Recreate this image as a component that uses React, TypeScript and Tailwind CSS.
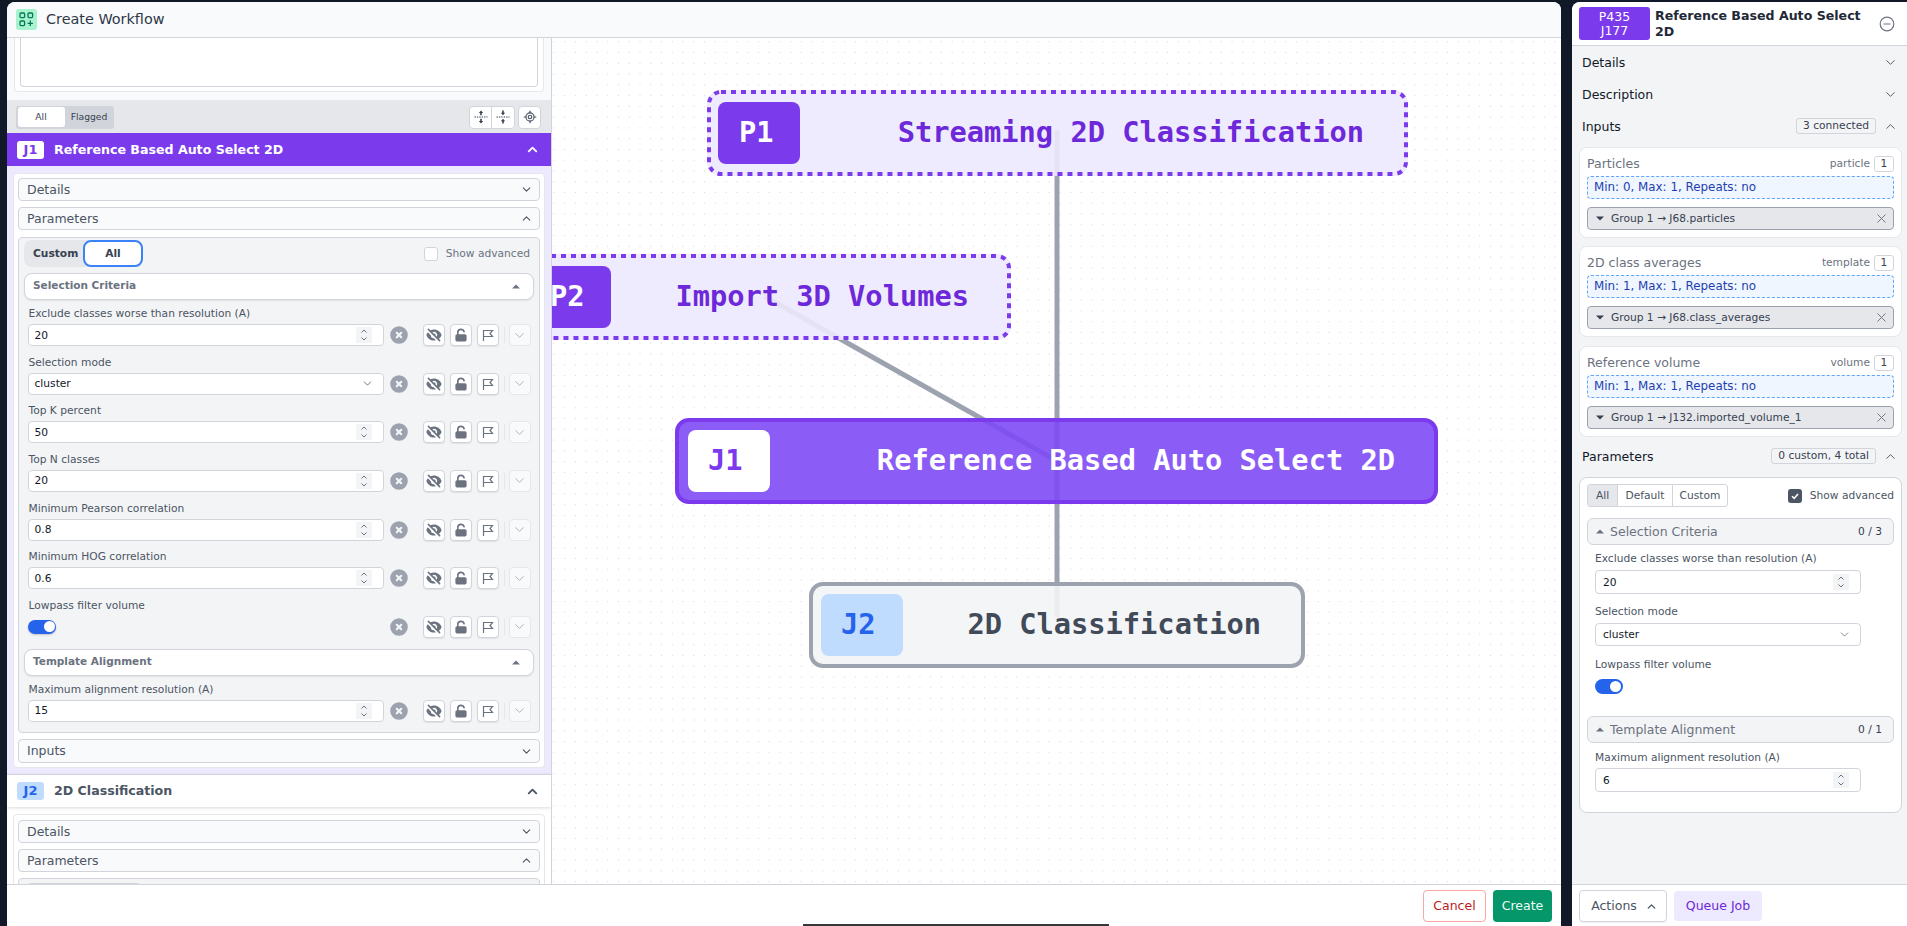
import React from "react";
import { ChevronDown, ChevronUp, LocateFixed, X } from "lucide-react";
import { HiEyeOff, HiLockOpen, HiXCircle } from "react-icons/hi";

const Caret = ({ up = false, cls = "" }: { up?: boolean; cls?: string }) => (
  <svg width="8" height="5" viewBox="0 0 8 5" className={cls}>
    <polygon points={up ? "4,0.5 8,4.5 0,4.5" : "0,0.5 8,0.5 4,4.5"} fill="currentColor" />
  </svg>
);

const Spinner = () => (
  <div className="w-[16px] h-[16px] bg-[#f3f4f6] flex flex-col items-center justify-center text-[#6b7280] shrink-0">
    <svg width="8" height="14" viewBox="0 0 8 14" fill="none" stroke="currentColor" strokeWidth="1">
      <path d="M1.5 4.5 4 2l2.5 2.5M1.5 9.5 4 12l2.5-2.5" />
    </svg>
  </div>
);

const FlagIcon = () => (
  <svg width="14" height="14" viewBox="0 0 14 14" fill="none" stroke="currentColor" strokeWidth="1.2">
    <path d="M2.5 13V2.5h9L9 5.5l2.5 3H2.5" />
  </svg>
);

const ExpandIcon = ({ inward = false }: { inward?: boolean }) => (
  <svg width="14" height="14" viewBox="0 0 14 14" className="text-[#374151]">
    <path d="M0.5 7h13" stroke="currentColor" strokeWidth="1" strokeDasharray="1.4 1" fill="none" />
    {inward ? (
      <path d="M7 5.2 4.8 2.8h1.4V0.6h1.6v2.2h1.4zM7 8.8l2.2 2.4H7.8v2.2H6.2v-2.2H4.8z" fill="currentColor" />
    ) : (
      <path d="M7 0.6 9.2 3H7.8v2.2H6.2V3H4.8zM7 13.4 4.8 11h1.4V8.8h1.6V11h1.4z" fill="currentColor" />
    )}
  </svg>
);

const IconBtn = ({ children, faded = false }: { children: React.ReactNode; faded?: boolean }) => (
  <div
    className={
      "w-[22px] h-[22px] rounded-[4px] border flex items-center justify-center shrink-0 " +
      (faded
        ? "border-[#e5e7eb] bg-[#f9fafb] text-[#9ca3af]"
        : "border-[#d1d5db] bg-white text-[#6b7280] shadow-[0_1px_1px_rgba(0,0,0,0.08)]")
    }
  >
    {children}
  </div>
);

const RowActions = () => (
  <>
    <div className="w-[18px] ml-[6px] shrink-0 text-[#9ca3af] flex items-center justify-center">
      <HiXCircle size={22} className="shrink-0" />
    </div>
    <div className="ml-[15px]">
      <IconBtn>
        <HiEyeOff size={16} />
      </IconBtn>
    </div>
    <div className="ml-[5px]">
      <IconBtn>
        <HiLockOpen size={16} />
      </IconBtn>
    </div>
    <div className="ml-[5px]">
      <IconBtn>
        <FlagIcon />
      </IconBtn>
    </div>
    <div className="ml-[5px] w-px h-[16px] bg-[#e5e7eb]" />
    <div className="ml-[4px]">
      <IconBtn faded>
        <ChevronDown size={15} strokeWidth={1.3} />
      </IconBtn>
    </div>
  </>
);

const ParamRow = ({ label, value, select = false, toggle = false }: { label: string; value?: string; select?: boolean; toggle?: boolean }) => (
  <div className="h-[48.67px] pl-[3.5px] shrink-0">
    <div className="h-[15px] leading-[15px] text-[10.67px] text-[#4b5563] ml-[1px]">{label}</div>
    <div className="mt-[3px] flex items-center h-[22px]">
      {toggle ? (
        <div className="w-[356px] shrink-0">
          <div className="w-[28px] h-[14px] rounded-full bg-[#2563eb] flex items-center justify-end pr-[1px] shadow-[0_1px_2px_rgba(0,0,0,0.2)]">
            <div className="w-[11px] h-[11px] rounded-full bg-white" />
          </div>
        </div>
      ) : (
        <div className="w-[356px] h-[22px] shrink-0 bg-white border border-[#d1d5db] rounded-[4px] flex items-center justify-between pl-[6px] pr-[11px] text-[10.67px] text-[#111827]">
          <span className="pt-[1px]">{value}</span>
          {select ? <ChevronDown size={13} strokeWidth={1.5} className="text-[#4b5563] mr-[-2px]" /> : <Spinner />}
        </div>
      )}
      <RowActions />
    </div>
  </div>
);

const Section = ({ title }: { title: string }) => (
  <div className="h-[27px] bg-white border border-[#d1d5db] rounded-lg shadow-[0_1px_2px_rgba(0,0,0,0.08)] flex items-center justify-between pl-[8px] pr-[13px] text-[10.5px] font-bold text-[#6b7280] shrink-0">
    <span className="pb-[2px]">{title}</span>
    <Caret up cls="text-[#6b7280]" />
  </div>
);

const CollapseRow = ({ title, open = false, tall = false }: { title: string; open?: boolean; tall?: boolean }) => (
  <div
    className={
      "bg-[#f9fafb] border border-[#d1d5db] rounded-[4px] flex items-center justify-between pl-[8px] pr-[6px] text-[12.5px] text-[#4b5563] shrink-0 " +
      (tall ? "h-[24px]" : "h-[23px]")
    }
  >
    <span className="pt-[1px]">{title}</span>
    {open ? <ChevronUp size={13} strokeWidth={2} /> : <ChevronDown size={13} strokeWidth={2} />}
  </div>
);

const JobHeader = ({ id, title, active = false }: { id: string; title: string; active?: boolean }) => (
  <div
    className={
      "h-[33px] shrink-0 flex items-center pl-[10px] pr-[11px] " +
      (active ? "bg-[#7c3aed] text-white" : "bg-white text-[#4b5563] border-t border-[#d1d5db] shadow-[0_1px_3px_rgba(0,0,0,0.15)] relative")
    }
  >
    <div
      className={
        "w-[27px] h-[18px] rounded-[3px] flex items-center justify-center text-[13px] font-bold " +
        (active ? "bg-white text-[#7c3aed]" : "bg-[#bfdbfe] text-[#2563eb]")
      }
    >
      {id}
    </div>
    <div className={"ml-[10px] flex-1 text-[12.6px] font-bold " + (active ? "pt-[1px]" : "")}>{title}</div>
    <ChevronUp size={15} strokeWidth={3} />
  </div>
);

const GraphNode = ({
  pos,
  wrap,
  badge,
  id,
  title,
  titleCls,
  dashed,
  pad = "pl-[8px]",
}: {
  pos: string;
  wrap: string;
  badge: string;
  id: string;
  title: string;
  titleCls: string;
  dashed?: number;
  pad?: string;
}) => (
  <div className={"absolute flex items-center justify-between h-[86px] rounded-[14px] font-['DejaVu_Sans_Mono'] font-bold text-[28.7px] " + pad + " " + pos + " " + wrap}>
    {dashed ? (
      <svg className="absolute left-0 top-0" width={dashed} height="86" fill="none" stroke="#7c3aed" strokeWidth="4" strokeDasharray="5 5">
        <rect x="2" y="2" width={dashed - 4} height="82" rx="12" />
      </svg>
    ) : null}
    <div className={"relative w-[82px] h-[62px] rounded-lg flex items-center shrink-0 " + (dashed ? "pl-[21px] " : "pl-[20px] ") + badge}>{id}</div>
    <div className={"relative whitespace-nowrap " + titleCls}>{title}</div>
  </div>
);

const InputCard = ({ title, kind, min, group, mt }: { title: string; kind: string; min: string; group: string; mt: string }) => (
  <div className={"ml-[7px] mr-[5px] h-[91px] bg-white border border-[#e5e7eb] rounded-lg px-[7px] pt-[8px] shrink-0 " + mt}>
    <div className="h-[16px] flex items-center justify-between">
      <span className="text-[12.5px] text-[#6b7280]">{title}</span>
      <div className="flex items-center">
        <span className="text-[10.67px] text-[#6b7280]">{kind}</span>
        <span className="ml-[4px] w-[20px] h-[16px] border border-[#d1d5db] rounded-[3px] flex items-center justify-center text-[10.67px] text-[#374151]">1</span>
      </div>
    </div>
    <div className="mt-[4px] h-[23px] bg-[#eff6ff] border border-dashed border-[#60a5fa] rounded-[4px] flex items-center pl-[6px] text-[11.9px] text-[#1e40af]">{min}</div>
    <div className="mt-[8px] h-[23px] bg-[#e5e7eb] border border-[#9ca3af] rounded-[4px] flex items-center pl-[8px] pr-[4px] text-[10.67px] text-[#374151]">
      <Caret cls="text-[#374151] shrink-0" />
      <span className="ml-[7px] flex-1">{group}</span>
      <X size={15} strokeWidth={1.5} className="text-[#6b7280]" />
    </div>
  </div>
);

const AccRow = ({ title, open = false, badge }: { title: string; open?: boolean; badge?: string }) => (
  <div className="h-[32px] shrink-0 flex items-center pl-[10px] pr-[9px] text-[12.5px] text-[#111827]">
    <span className="flex-1 pt-[2px]">{title}</span>
    {badge && (
      <span className="mr-[7px] h-[16.5px] px-[6px] flex items-center border border-[#d1d5db] rounded-[3px] text-[10.67px] text-[#374151]">{badge}</span>
    )}
    {open ? <ChevronUp size={15} strokeWidth={1.5} className="text-[#4b5563]" /> : <ChevronDown size={15} strokeWidth={1.5} className="text-[#4b5563]" />}
  </div>
);

const GrayHead = ({ title, count, mt }: { title: string; count: string; mt: string }) => (
  <div className={"h-[27px] bg-[#f3f4f6] border border-[#d1d5db] rounded-md flex items-center pl-[8px] pr-[11px] shrink-0 " + mt}>
    <Caret up cls="text-[#6b7280]" />
    <span className="ml-[6px] flex-1 text-[12.5px] text-[#6b7280] pt-[1px]">{title}</span>
    <span className="text-[10.67px] text-[#374151]">{count}</span>
  </div>
);

export default function App() {
  return (
    <div className="relative w-[1907px] h-[926px] overflow-hidden bg-[#111827] pt-[2px] pl-[7px] flex font-['DejaVu_Sans',sans-serif]">
      {/* Modal */}
      <div className="w-[1554px] h-full flex flex-col bg-white rounded-t-lg overflow-hidden shrink-0">
        <div className="h-[36px] shrink-0 bg-[#f9fafb] border-b border-[#d1d5db] flex items-center pl-[9px]">
          <div className="w-[21px] h-[21px] rounded-[3px] bg-[#a7f3d0] text-[#047857] flex items-center justify-center">
            <svg width="15" height="15" viewBox="0 0 15 15" fill="none" stroke="currentColor" strokeWidth="1.3">
              <rect x="1" y="1" width="4.6" height="4.6" rx="1" />
              <rect x="9" y="1" width="4.6" height="4.6" rx="1" />
              <rect x="1" y="9" width="4.6" height="4.6" rx="1" />
              <path d="M11.3 8.6v5.4M8.6 11.3H14" />
            </svg>
          </div>
          <span className="ml-[9px] text-[14.4px] text-[#2d3748]">Create Workflow</span>
        </div>

        <div className="flex-1 flex min-h-0">
          {/* Left panel */}
          <div className="w-[545px] shrink-0 border-r border-[#d1d5db] flex flex-col overflow-hidden bg-white">
            <div className="h-[63px] shrink-0 bg-[#f9fafb] border-b border-[#e5e7eb] px-[7px]">
              <div className="h-[54px] bg-white border border-t-0 border-[#e5e7eb] rounded-b-[4px] px-[5px]">
                <div className="h-[49px] bg-white border border-t-0 border-[#d1d5db] rounded-b-[4px]" />
              </div>
            </div>
            <div className="h-[32px] shrink-0 bg-[#e5e7eb] flex items-center pl-[9px] pr-[10px]">
              <div className="w-[98px] h-[23px] bg-[#d1d5db] rounded-[3px] flex items-center px-[2px] text-[9.2px] text-[#374151]">
                <div className="w-[47px] h-[20px] bg-white rounded-[3px] flex items-center justify-center pr-[1px]">All</div>
                <div className="flex-1 text-center pl-[1px]">Flagged</div>
              </div>
              <div className="flex-1" />
              <div className="h-[23px] flex bg-white border border-[#d1d5db] rounded-[4px]">
                <div className="w-[22px] flex items-center justify-center border-r border-[#d1d5db]">
                  <ExpandIcon />
                </div>
                <div className="w-[22px] flex items-center justify-center">
                  <ExpandIcon inward />
                </div>
              </div>
              <div className="ml-[3px] w-[23px] h-[23px] bg-white border border-[#d1d5db] rounded-[4px] flex items-center justify-center text-[#4b5563]">
                <LocateFixed size={14} strokeWidth={2} />
              </div>
            </div>
            <JobHeader id="J1" title="Reference Based Auto Select 2D" active />
            <div className="h-[608px] shrink-0 bg-[#ede9fe] px-[6px] pt-[7px]">
              <div className="h-[595px] bg-white border border-[#e5e7eb] rounded-[4px] px-[4px] pt-[4px] flex flex-col">
                <CollapseRow title="Details" />
                <div className="mt-[6px]">
                  <CollapseRow title="Parameters" open />
                </div>
                <div className="mt-[7px] h-[496px] bg-[#f3f4f6] border border-[#d1d5db] rounded-[4px] px-[5px] pt-[2px] flex flex-col shrink-0">
                  <div className="h-[27px] flex items-center justify-between shrink-0">
                    <div className="flex items-center h-[27px] w-[119px] bg-[#e5e7eb] rounded-lg text-[10.67px] font-bold text-[#374151]">
                      <span className="w-[59px] pl-[9px]">Custom</span>
                      <div className="w-[60px] h-[27px] bg-white border-2 border-[#3b82f6] rounded-lg flex items-center justify-center">All</div>
                    </div>
                    <div className="flex items-center mr-[4px]">
                      <div className="w-[14px] h-[14px] bg-white border border-[#d1d5db] rounded-[3px]" />
                      <span className="ml-[8px] text-[10.67px] text-[#6b7280]">Show advanced</span>
                    </div>
                  </div>
                  <div className="mt-[6px]">
                    <Section title="Selection Criteria" />
                  </div>
                  <div className="mt-[6px]">
                    <ParamRow label="Exclude classes worse than resolution (A)" value="20" />
                    <ParamRow label="Selection mode" value="cluster" select />
                    <ParamRow label="Top K percent" value="50" />
                    <ParamRow label="Top N classes" value="20" />
                    <ParamRow label="Minimum Pearson correlation" value="0.8" />
                    <ParamRow label="Minimum HOG correlation" value="0.6" />
                    <ParamRow label="Lowpass filter volume" toggle />
                  </div>
                  <div className="mt-[2.3px]">
                    <Section title="Template Alignment" />
                  </div>
                  <div className="mt-[6px]">
                    <ParamRow label="Maximum alignment resolution (A)" value="15" />
                  </div>
                </div>
                <div className="mt-[6px]">
                  <CollapseRow title="Inputs" tall />
                </div>
              </div>
            </div>
            <JobHeader id="J2" title="2D Classification" />
            <div className="flex-1 min-h-0 bg-white px-[6px] pt-[7px] overflow-hidden">
              <div className="bg-white border border-[#e5e7eb] rounded-[4px] px-[4px] pt-[5px] flex flex-col h-[200px]">
                <CollapseRow title="Details" />
                <div className="mt-[6px]">
                  <CollapseRow title="Parameters" open />
                </div>
                <div className="mt-[6px] h-[120px] bg-[#f3f4f6] border border-[#d1d5db] rounded-[4px] px-[5px] pt-[4px] shrink-0">
                  <div className="h-[27px] w-[120px] bg-[#d1d5db] rounded-lg" />
                </div>
              </div>
            </div>
          </div>

          {/* Canvas */}
          <div className="flex-1 relative overflow-hidden bg-white bg-[radial-gradient(#d8dbe0_0.8px,transparent_1px)] bg-[length:10.77px_10.77px] bg-[position:-3.5px_-1.6px]">
            <svg className="absolute inset-0" width="1009" height="846" fill="none" stroke="#9ca3af" strokeWidth="5">
              <path d="M505 92V579" />
              <path d="M212 258 505 423" />
            </svg>
            <GraphNode dashed={701} pos="left-[155px] top-[52px] w-[701px] pr-[44px]" wrap="bg-[#ede9fe]/90" badge="bg-[#7c3aed] text-white" id="P1" title="Streaming 2D Classification" titleCls="text-[#6d28d9]" pad="pl-[11px]" />
            <GraphNode dashed={494} pos="left-[-35px] top-[216px] w-[494px] pr-[42px]" wrap="bg-[#ede9fe]/90" badge="bg-[#7c3aed] text-white" id="P2" title="Import 3D Volumes" titleCls="text-[#6d28d9]" pad="pl-[12px]" />
            <GraphNode pos="left-[123px] top-[380px] w-[763px] pr-[39px] border-4" wrap="border-[#7c3aed] bg-[#7e4af5]/90" badge="bg-white text-[#7c3aed]" id="J1" title="Reference Based Auto Select 2D" titleCls="text-white" pad="pl-[9px]" />
            <GraphNode pos="left-[257px] top-[544px] w-[496px] pr-[40px] border-4" wrap="border-[#9ca3af] bg-[#f3f4f6]/90" badge="bg-[#bfdbfe] text-[#2563eb]" id="J2" title="2D Classification" titleCls="text-[#414a58]" />
          </div>
        </div>

        <div className="h-[42px] shrink-0 bg-white border-t border-[#d1d5db] flex justify-end pr-[9px] pt-[5px] gap-[7px] text-[12.5px]">
          <div className="w-[63px] h-[32px] border border-[#fca5a5] rounded-[4px] flex items-center justify-center text-[#b91c1c]">Cancel</div>
          <div className="w-[59px] h-[32px] bg-[#059669] rounded-[4px] flex items-center justify-center text-[#ecfdf5]">Create</div>
        </div>
      </div>

      {/* Right panel */}
      <div className="ml-[11px] w-[335px] h-full flex flex-col bg-[#f3f4f6] rounded-tl-lg overflow-hidden shrink-0">
        <div className="h-[44px] shrink-0 bg-white border-b border-[#d1d5db] flex items-center pl-[7px] pr-[12px]">
          <div className="w-[71px] h-[33px] bg-[#7c3aed] rounded-[3px] text-white text-[12.5px] leading-[14px] flex flex-col items-center justify-center shrink-0">
            <span>P435</span>
            <span>J177</span>
          </div>
          <div className="ml-[5px] flex-1 text-[12.6px] leading-[16px] font-bold text-[#1f2937]">Reference Based Auto Select 2D</div>
          <svg width="16" height="16" viewBox="0 0 16 16" fill="none" stroke="#6b7280" strokeWidth="1.2" className="shrink-0">
            <circle cx="8" cy="8" r="6.8" />
            <path d="M4.5 8h7" />
          </svg>
        </div>
        <div className="flex-1 min-h-0 flex flex-col">
          <AccRow title="Details" />
          <AccRow title="Description" />
          <AccRow title="Inputs" open badge="3 connected" />
          <InputCard mt="mt-[5px]" title="Particles" kind="particle" min="Min: 0, Max: 1, Repeats: no" group="Group 1 → J68.particles" />
          <InputCard mt="mt-[8px]" title="2D class averages" kind="template" min="Min: 1, Max: 1, Repeats: no" group="Group 1 → J68.class_averages" />
          <InputCard mt="mt-[9px]" title="Reference volume" kind="volume" min="Min: 1, Max: 1, Repeats: no" group="Group 1 → J132.imported_volume_1" />
          <div className="mt-[3px]">
            <AccRow title="Parameters" open badge="0 custom, 4 total" />
          </div>
          <div className="mt-[5px] ml-[7px] mr-[5px] h-[336px] bg-white border border-[#d1d5db] rounded-lg px-[7px] pt-[6px] flex flex-col shrink-0">
            <div className="flex items-center justify-between h-[23px] shrink-0">
              <div className="flex h-[23px] border border-[#d1d5db] rounded-[3px] overflow-hidden text-[10.67px] text-[#4b5563]">
                <div className="w-[29px] bg-[#e5e7eb] flex items-center justify-center">All</div>
                <div className="w-[55px] border-l border-[#d1d5db] flex items-center justify-center">Default</div>
                <div className="w-[55px] border-l border-[#d1d5db] flex items-center justify-center">Custom</div>
              </div>
              <div className="flex items-center">
                <div className="w-[14px] h-[14px] bg-[#4b5563] rounded-[3px] flex items-center justify-center">
                  <svg width="10" height="10" viewBox="0 0 10 10" fill="none" stroke="white" strokeWidth="1.6">
                    <path d="M2 5.2 4.2 7.4 8 3" />
                  </svg>
                </div>
                <span className="ml-[8px] text-[10.67px] text-[#4b5563]">Show advanced</span>
              </div>
            </div>
            <GrayHead title="Selection Criteria" count="0 / 3" mt="mt-[11px]" />
            <div className="pl-[8px] flex flex-col">
              <div className="mt-[6px] h-[16px] leading-[16px] text-[10.67px] text-[#4b5563]">Exclude classes worse than resolution (A)</div>
              <div className="mt-[3px] w-[266px] h-[24px] bg-white border border-[#d1d5db] rounded-[4px] flex items-center justify-between pl-[7px] pr-[11px] text-[10.67px] text-[#111827]">
                <span className="pt-[1px]">20</span>
                <Spinner />
              </div>
              <div className="mt-[10px] h-[16px] leading-[16px] text-[10.67px] text-[#4b5563]">Selection mode</div>
              <div className="mt-[3px] w-[266px] h-[23px] bg-white border border-[#d1d5db] rounded-[4px] flex items-center justify-between pl-[7px] pr-[9px] text-[10.67px] text-[#111827]">
                <span>cluster</span>
                <ChevronDown size={13} strokeWidth={1.5} className="text-[#6b7280]" />
              </div>
              <div className="mt-[11px] h-[16px] leading-[16px] text-[10.67px] text-[#4b5563]">Lowpass filter volume</div>
              <div className="mt-[6px] w-[28px] h-[15px] rounded-full bg-[#2563eb] flex items-center justify-end pr-[2px]">
                <div className="w-[11px] h-[11px] rounded-full bg-white" />
              </div>
            </div>
            <GrayHead title="Template Alignment" count="0 / 1" mt="mt-[22px]" />
            <div className="pl-[8px] flex flex-col">
              <div className="mt-[7px] h-[16px] leading-[16px] text-[10.67px] text-[#4b5563]">Maximum alignment resolution (A)</div>
              <div className="mt-[2px] w-[266px] h-[24px] bg-white border border-[#d1d5db] rounded-[4px] flex items-center justify-between pl-[7px] pr-[11px] text-[10.67px] text-[#111827]">
                <span className="pt-[1px]">6</span>
                <Spinner />
              </div>
            </div>
          </div>
        </div>
        <div className="h-[42px] shrink-0 bg-white border-t border-[#d1d5db] flex items-start pt-[5px] pl-[7px] gap-[7px] text-[12.5px]">
          <div className="w-[88px] h-[32px] border border-[#d1d5db] rounded-[4px] flex items-center justify-center gap-[8px] pl-[3px] text-[#4b5563] shadow-[0_1px_1px_rgba(0,0,0,0.06)]">
            <span>Actions</span>
            <ChevronUp size={13} strokeWidth={2.5} />
          </div>
          <div className="mt-[1px] w-[88px] h-[30px] bg-[#ede9fe] rounded-[4px] flex items-center justify-center text-[#6d28d9]">Queue Job</div>
        </div>
      </div>

      {/* Window-edge bar over the page */}
      <div className="absolute left-[803px] bottom-0 w-[306px] h-[2px] bg-[#33383d]" />
    </div>
  );
}
